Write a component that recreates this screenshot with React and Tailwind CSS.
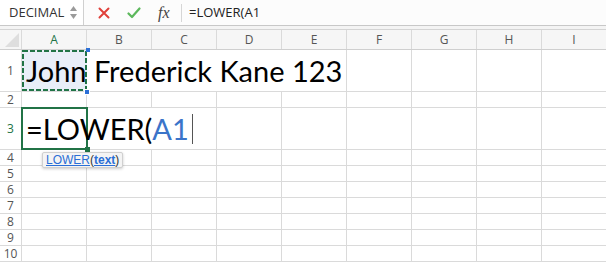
import React from 'react';

const cols = ['A', 'B', 'C', 'D', 'E', 'F', 'G', 'H', 'I'];
const smallRows = [4, 5, 6, 7, 8, 9, 10];

const grid = 'border-[#dadada]';

const RowHead = ({ n, h, active }) => (
  <div
    className={`w-[22px] shrink-0 flex items-center justify-center border-r border-b ${grid} text-[12px] ${active ? 'text-[#217346]' : 'text-[#555]'}`}
    style={{ height: h }}
  >
    {n}
  </div>
);

const Cell = ({ noRight, children, className = '' }) => (
  <div className={`relative w-[65px] shrink-0 h-full border-b ${noRight ? '' : 'border-r'} ${grid} ${className}`}>
    {children}
  </div>
);

const App = () => {
  return (
    <div className="w-[606px] h-[262px] overflow-hidden bg-white" style={{ fontFamily: '"Open Sans", sans-serif' }}>
      {/* formula bar */}
      <div className="h-[26px] flex items-center border-b border-[#c8c8c8] bg-[#fcfcfc]">
        <div className="w-[84px] h-full flex items-center justify-between border-r border-[#d0d0d0] pl-[9px] pr-[6px] bg-white">
          <span className="text-[13px] text-[#333]">DECIMAL</span>
          <div className="flex flex-col gap-[3px] items-center">
            <svg width="7" height="5" viewBox="0 0 7 5"><path d="M3.5 0 L7 5 L0 5 Z" fill="#9a9a9a" /></svg>
            <svg width="7" height="5" viewBox="0 0 7 5"><path d="M0 0 L7 0 L3.5 5 Z" fill="#9a9a9a" /></svg>
          </div>
        </div>
        <div className="w-[97px] flex items-center pl-[14px] gap-[17px]">
          <svg width="12" height="12" viewBox="0 0 12 12">
            <path d="M1.5 1.5 L10.5 10.5 M10.5 1.5 L1.5 10.5" stroke="#e0403a" strokeWidth="2" strokeLinecap="round" />
          </svg>
          <svg width="14" height="12" viewBox="0 0 14 12">
            <path d="M1.5 6.5 L5 10 L12.5 1.5" stroke="#5cb85c" strokeWidth="2.2" fill="none" strokeLinecap="round" strokeLinejoin="round" />
          </svg>
          <span className="text-[16px] italic text-[#444] leading-none" style={{ fontFamily: '"Liberation Serif", serif' }}>fx</span>
        </div>
        <div className="h-[18px] border-l border-[#d6d6d6]" />
        <span className="pl-[7px] text-[13px] text-[#222]">=LOWER(A1</span>
      </div>

      <div className="h-[4px] bg-[#f4f4f4] border-b border-[#d4d4d4]" />

      {/* column headers */}
      <div className="h-[20px] flex bg-[#f6f6f6] border-b border-[#cfcfcf]">
        <div className={`relative w-[22px] shrink-0 border-r ${grid}`}>
          <svg className="absolute right-[2px] bottom-[2px]" width="14" height="14" viewBox="0 0 14 14">
            <path d="M14 0 L14 14 L0 14 Z" fill="#dedede" />
          </svg>
        </div>
        {cols.map((c) => (
          <div
            key={c}
            className={`w-[65px] shrink-0 flex items-center justify-center border-r ${grid} text-[12px] ${c === 'A' ? 'text-[#217346]' : 'text-[#555]'}`}
          >
            {c}
          </div>
        ))}
      </div>

      {/* row 1 */}
      <div className="flex h-[42px]">
        <RowHead n={1} h={42} />
        <Cell noRight className="bg-[#e9eef8]">
          <svg className="absolute inset-0 z-10" width="65" height="41" viewBox="0 0 65 41">
            <rect x="1" y="1" width="63" height="39" fill="none" stroke="#217346" strokeWidth="2" strokeDasharray="5 2" />
          </svg>
          <div className="absolute right-[-3px] top-[-2px] w-[4px] h-[4px] bg-[#2b6fd6] z-20" />
          <div className="absolute right-[-3px] bottom-[-4px] w-[6px] h-[6px] bg-[#2b6fd6] border border-white z-20" />
          <span
            className="absolute left-[4px] top-0 h-full flex items-center whitespace-nowrap text-[29px] text-black z-10"
            style={{ fontFamily: 'Lato, sans-serif' }}
          >
            John Frederick Kane 123
          </span>
        </Cell>
        <Cell noRight />
        <Cell noRight />
        <Cell noRight />
        <Cell />
        <Cell />
        <Cell />
        <Cell />
        <Cell />
      </div>

      {/* row 2 */}
      <div className="flex h-[16px]">
        <RowHead n={2} h={16} />
        {cols.map((c) => (
          <Cell key={c} />
        ))}
      </div>

      {/* row 3 - editing */}
      <div className="flex h-[42px]">
        <RowHead n={3} h={42} active />
        <Cell noRight>
          <div className="absolute inset-[-1px] border-2 border-[#217346] z-10" />
          <div className="absolute right-[-3px] bottom-[-3px] w-[5px] h-[5px] bg-[#217346] z-20" />
          <span
            className="absolute left-[4px] top-0 h-full flex items-center whitespace-nowrap text-[29px] text-black z-10"
            style={{ fontFamily: 'Lato, sans-serif' }}
          >
            =LOWER(<span className="text-[#3b74c9]">A1</span>
            <span className="ml-[3px] w-px h-[30px] bg-[#555]" />
          </span>
        </Cell>
        <Cell noRight />
        <Cell />
        <Cell />
        <Cell />
        <Cell />
        <Cell />
        <Cell />
        <Cell />
      </div>

      {/* rows 4-10 */}
      {smallRows.map((r) => (
        <div key={r} className="relative flex h-[16px]">
          <RowHead n={r} h={16} />
          {cols.map((c) => (
            <Cell key={c} />
          ))}
          {r === 4 && (
            <div className="absolute left-[42px] top-[2px] z-30 px-[3px] h-[16px] flex items-center bg-[#f4f4f4] border border-[#d0d0d0] rounded-[2px] shadow-[0_1px_3px_rgba(0,0,0,0.2)] text-[12px] text-[#333] whitespace-nowrap" style={{ fontFamily: '"Liberation Sans", sans-serif' }}>
              <span className="text-[#2a6fd6] underline">LOWER</span>(
              <span className="text-[#2a6fd6] underline font-bold">text</span>)
            </div>
          )}
        </div>
      ))}
    </div>
  );
};

export default App;
